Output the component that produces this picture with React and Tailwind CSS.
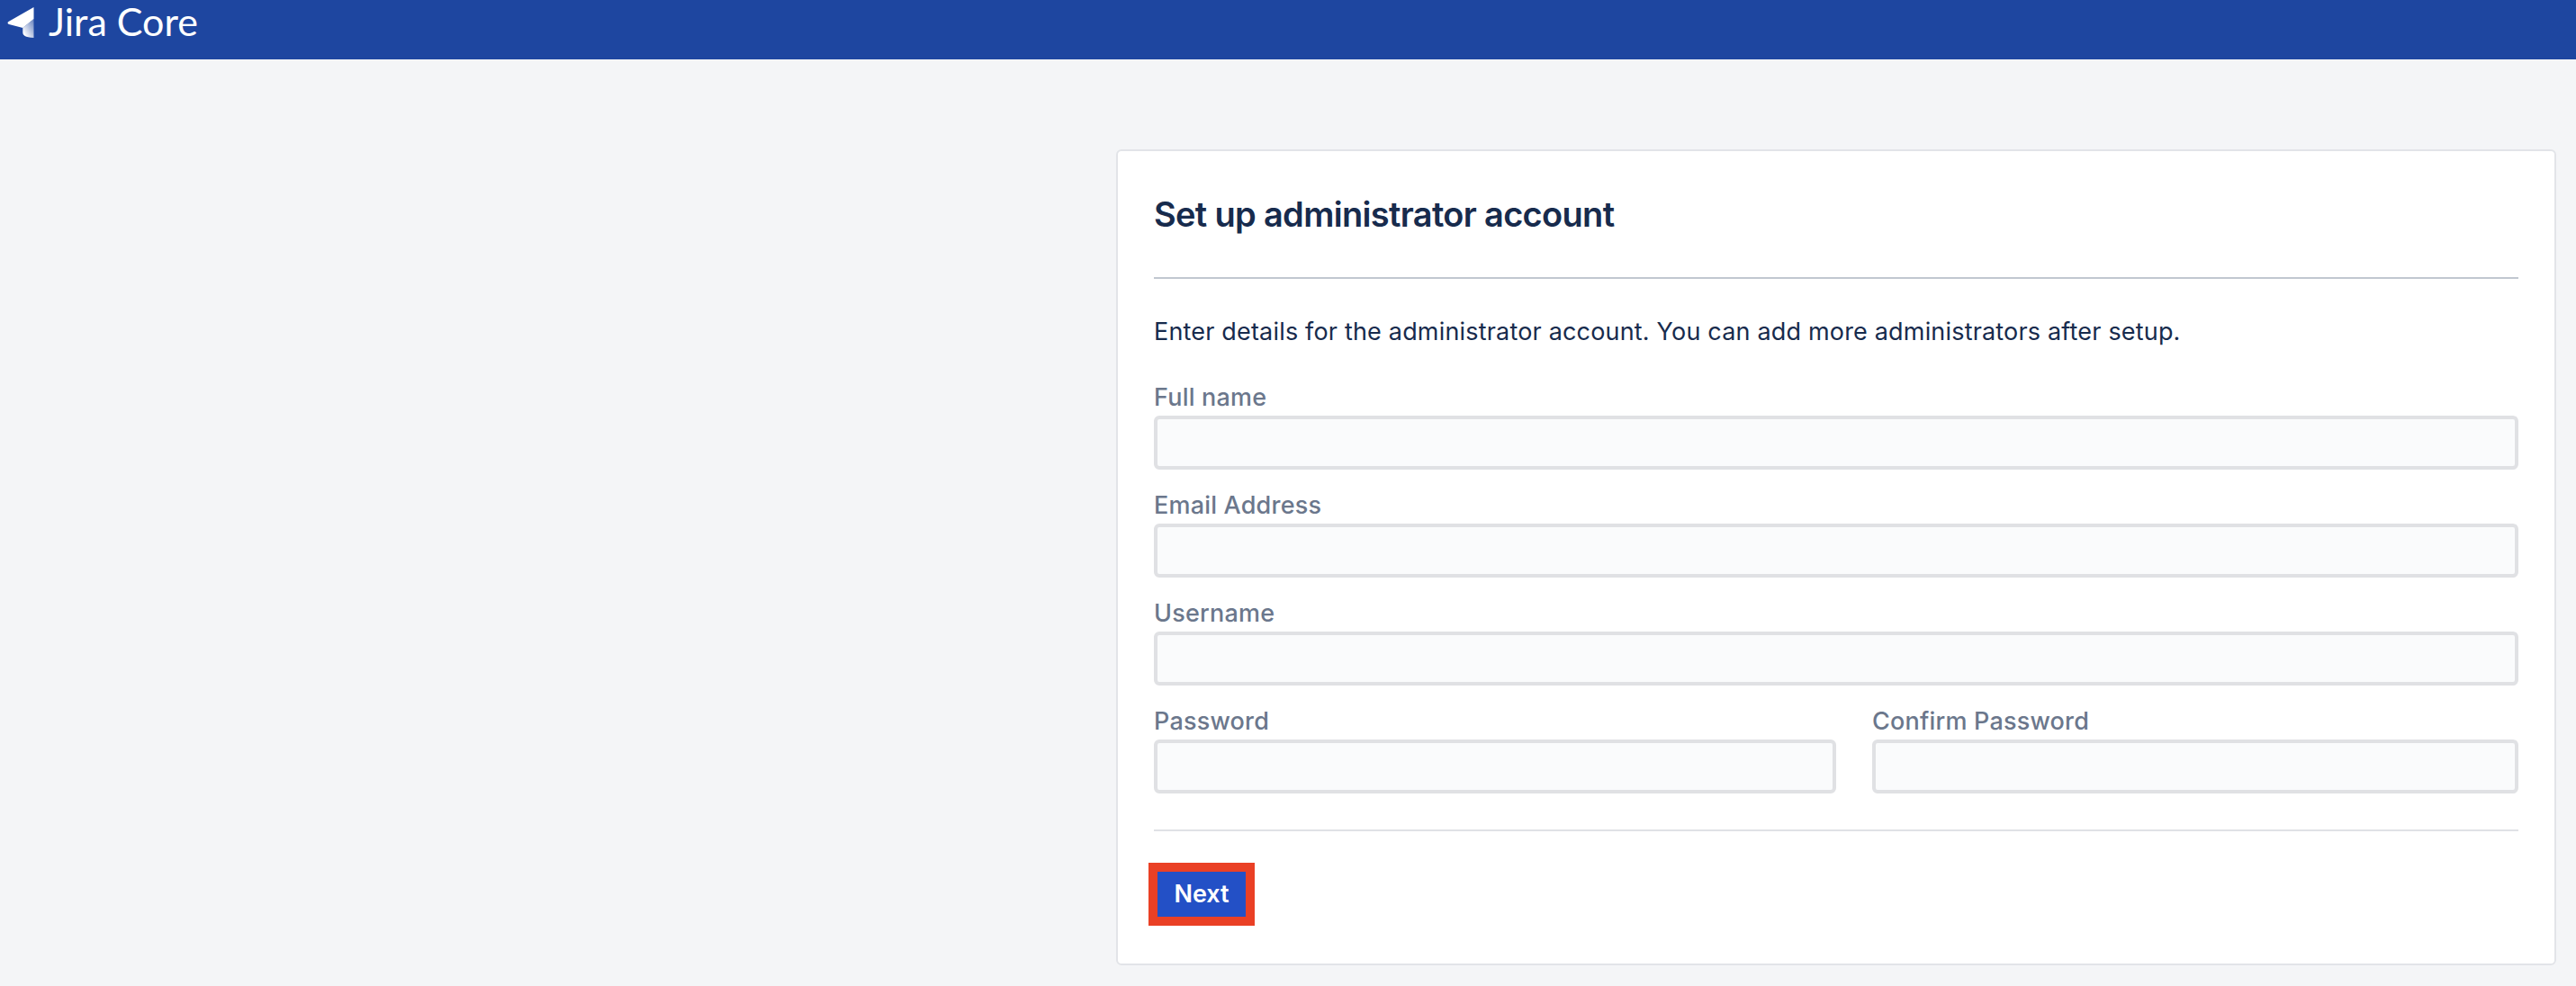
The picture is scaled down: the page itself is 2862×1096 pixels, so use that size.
import React from 'react'

function Logo() {
  return (
    <svg width="40" height="44" viewBox="0 0 40 44" className="shrink-0">
      <defs>
        <linearGradient id="fold" x1="0.9" y1="0" x2="0.1" y2="0.8">
          <stop offset="0" stopColor="#ffffff" stopOpacity="0.35" />
          <stop offset="1" stopColor="#ffffff" />
        </linearGradient>
      </defs>
      <path d="M37.5 8 L9.5 24 C8 25 8.3 26.4 10 27 L25.3 31 L37.5 21 Z" fill="#fff" />
      <path d="M37.5 21 L25.3 31 L25.3 36 C25.3 39 27.5 41.5 37.5 42 Z" fill="url(#fold)" />
    </svg>
  )
}

function Field({ label, className = '' }) {
  return (
    <div className={className}>
      <label className="block h-[33px] text-[27px] leading-[26px] tracking-[0.2px] font-medium text-[#6b778c]">{label}</label>
      <input
        type="text"
        className="block w-full h-[60px] rounded-[6px] border-[4px] border-[#e0e1e4] bg-[#fafbfc] outline-none"
      />
    </div>
  )
}

export default function App() {
  return (
    <div className="min-h-[1096px] bg-[#f4f5f7] font-['Inter','Liberation_Sans',sans-serif]">
      <header className="flex items-start h-[66px] bg-[#1e46a0]">
        <Logo />
        <span className="ml-[14px] -mt-[1px] text-[43px] leading-[50px] text-white font-['Lato',sans-serif]">Jira Core</span>
      </header>

      <main className="pt-[100px] pl-[1240px] pr-[22px] pb-[23px]">
        <div className="h-[907px] rounded-[6px] border-2 border-[#e2e4e8] bg-white px-[40px]">
          <h1 className="pt-[46px] h-[142px] border-b-2 border-[#c1c7d0] text-[38px] leading-[48px] tracking-[-0.68px] font-[570] text-[#172b4d]">
            Set up administrator account
          </h1>
          <p className="mt-[41px] h-[36px] text-[27px] leading-[36px] tracking-[0.18px] text-[#172b4d]">
            Enter details for the administrator account. You can add more administrators after setup.
          </p>
          <div className="mt-[42px] flex flex-col gap-[27px]">
            <Field label="Full name" />
            <Field label="Email Address" />
            <Field label="Username" />
            <div className="grid grid-cols-[758px_1fr] gap-x-[40px]">
              <Field label="Password" />
              <Field label="Confirm Password" />
            </div>
          </div>
          <div className="mt-[40px] border-t-2 border-[#e0e1e6]">
            <div className="mt-[35px] -ml-[6px] w-[118px] border-[10px] border-[#ea4025]">
              <button className="block w-full h-[50px] bg-[#2350c6] text-[27px] font-semibold text-white">Next</button>
            </div>
          </div>
        </div>
      </main>
    </div>
  )
}
